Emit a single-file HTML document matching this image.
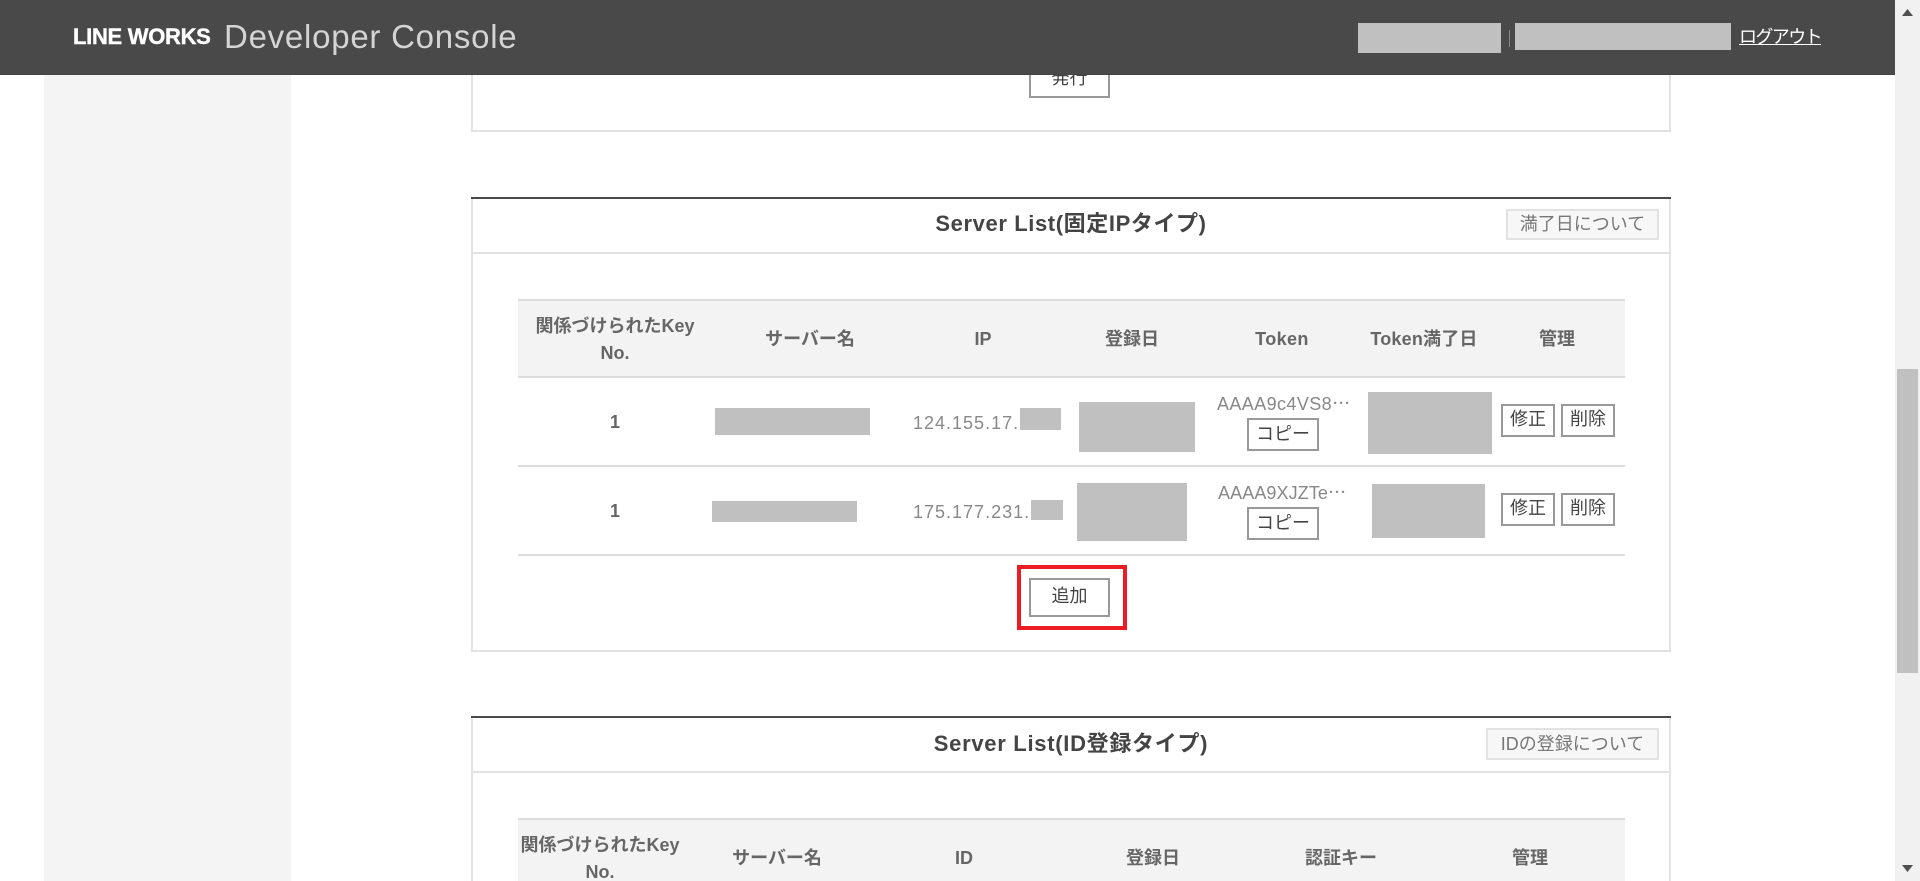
<!DOCTYPE html>
<html lang="ja">
<head>
<meta charset="utf-8">
<title>LINE WORKS Developer Console</title>
<style>
html,body{margin:0;padding:0;width:1920px;height:881px;overflow:hidden;background:#fff}
body{position:relative;font-family:"Liberation Sans","Noto Sans CJK JP",sans-serif;font-size:18px;color:#777}
div,a,span{position:absolute;box-sizing:border-box}
span.e{position:static;font-family:"Noto Sans CJK JP",sans-serif;letter-spacing:0}
.side{left:44px;top:0;width:247px;height:881px;background:#f4f4f4}
.card{left:471px;width:1200px;border:2px solid #e2e2e2;border-top:0;background:#fff}
.top{height:2px;background:#4a4a4a;left:471px;width:1200px}
.line{left:473px;width:1196px;height:2px;background:#e2e2e2}
.thead{left:518px;width:1107px;background:#f3f3f3;border-top:2px solid #ddd}
.rule{left:518px;width:1107px;height:2px;background:#ddd}
.r{background:#c0c0c0}
.t{white-space:nowrap;text-align:center;width:300px;height:24px;line-height:24px}
.th{font-weight:700;color:#666;font-size:18px}
.title{font-weight:700;color:#444;font-size:22px;height:30px;line-height:30px;width:500px;text-align:center;white-space:nowrap;letter-spacing:.6px}
.btn{border:2px solid #999;background:#fff;color:#444;text-align:center;white-space:nowrap;font-size:18px}
.gbtn{border:2px solid #e2e2e2;background:#f7f7f7;color:#777;text-align:center;white-space:nowrap;font-size:18px}
.v{color:#888;letter-spacing:1px;text-align:left;width:auto}
</style>
</head>
<body>
<div class="side"></div>

<!-- first card -->
<div class="card" style="top:0;height:132px"></div>
<div class="btn" style="left:1029px;top:60px;width:81px;height:38px;line-height:32px">発行</div>

<!-- second card -->
<div class="card" style="top:197px;height:455px"></div>
<div class="top" style="top:197px"></div>
<div class="line" style="top:252px"></div>
<div class="title" style="left:821px;top:209px">Server List(固定IPタイプ)</div>
<div class="gbtn" style="left:1506px;top:209px;width:153px;height:31px;line-height:27px">満了日について</div>

<div class="thead" style="top:299px;height:78px"></div>
<div class="t th" style="left:465px;top:314px">関係づけられたKey</div>
<div class="t th" style="left:465px;top:341px">No.</div>
<div class="t th" style="left:660px;top:327px">サーバー名</div>
<div class="t th" style="left:833px;top:327px">IP</div>
<div class="t th" style="left:982px;top:327px">登録日</div>
<div class="t th" style="left:1132px;top:327px;letter-spacing:.4px">Token</div>
<div class="t th" style="left:1274px;top:327px;letter-spacing:.2px">Token満了日</div>
<div class="t th" style="left:1407px;top:327px">管理</div>
<div class="rule" style="top:376px"></div>

<div class="t th" style="left:465px;top:410px">1</div>
<div class="r" style="left:715px;top:408px;width:155px;height:27px"></div>
<div class="t v" style="left:913px;top:411px">124.155.17.</div>
<div class="r" style="left:1020px;top:408px;width:41px;height:22px"></div>
<div class="r" style="left:1079px;top:402px;width:116px;height:50px"></div>
<div class="t" style="left:1217px;top:391px;width:140px;color:#888;letter-spacing:.4px;text-align:left">AAAA9c4VS8<span class="e">…</span></div>
<div class="btn" style="left:1247px;top:418px;width:72px;height:33px;line-height:29px">コピー</div>
<div class="r" style="left:1368px;top:392px;width:124px;height:62px"></div>
<div class="btn" style="left:1501px;top:404px;width:54px;height:33px;line-height:27px">修正</div>
<div class="btn" style="left:1561px;top:404px;width:54px;height:33px;line-height:27px">削除</div>
<div class="rule" style="top:465px"></div>

<div class="t th" style="left:465px;top:499px">1</div>
<div class="r" style="left:712px;top:501px;width:145px;height:21px"></div>
<div class="t v" style="left:913px;top:500px">175.177.231.</div>
<div class="r" style="left:1031px;top:500px;width:32px;height:20px"></div>
<div class="r" style="left:1077px;top:483px;width:110px;height:58px"></div>
<div class="t" style="left:1218px;top:480px;width:140px;color:#888;letter-spacing:.1px;text-align:left">AAAA9XJZTe<span class="e">…</span></div>
<div class="btn" style="left:1247px;top:507px;width:72px;height:33px;line-height:29px">コピー</div>
<div class="r" style="left:1372px;top:484px;width:113px;height:54px"></div>
<div class="btn" style="left:1501px;top:493px;width:54px;height:33px;line-height:27px">修正</div>
<div class="btn" style="left:1561px;top:493px;width:54px;height:33px;line-height:27px">削除</div>
<div class="rule" style="top:554px"></div>

<div class="btn" style="left:1029px;top:578px;width:81px;height:39px;line-height:33px">追加</div>
<div style="left:1017px;top:565px;width:110px;height:65px;border:4px solid #ed1c24"></div>

<!-- third card -->
<div class="card" style="top:716px;height:200px"></div>
<div class="top" style="top:716px"></div>
<div class="line" style="top:771px"></div>
<div class="title" style="left:821px;top:729px;letter-spacing:.7px">Server List(ID登録タイプ)</div>
<div class="gbtn" style="left:1486px;top:728px;width:173px;height:32px;line-height:28px">IDの登録について</div>

<div class="thead" style="top:818px;height:80px"></div>
<div class="t th" style="left:450px;top:833px">関係づけられたKey</div>
<div class="t th" style="left:450px;top:860px">No.</div>
<div class="t th" style="left:627px;top:846px">サーバー名</div>
<div class="t th" style="left:814px;top:846px">ID</div>
<div class="t th" style="left:1003px;top:846px">登録日</div>
<div class="t th" style="left:1191px;top:846px">認証キー</div>
<div class="t th" style="left:1380px;top:846px">管理</div>

<!-- header -->
<div style="left:0;top:0;width:1895px;height:75px;background:#494949;border-bottom:1px solid #444">
  <span style="left:73px;top:22px;font-size:22px;line-height:30px;font-weight:700;color:#fff;white-space:nowrap;letter-spacing:-.3px;-webkit-text-stroke:.4px #fff">LINE WORKS</span>
  <span style="left:224px;top:18px;font-size:33px;line-height:38px;color:#d4d4d4;white-space:nowrap;letter-spacing:.75px">Developer Console</span>
  <div class="r" style="left:1358px;top:23px;width:143px;height:30px"></div>
  <div style="left:1509px;top:30px;width:1px;height:17px;background:#8a8a8a"></div>
  <div class="r" style="left:1515px;top:23px;width:216px;height:27px"></div>
  <a style="left:1739px;top:25px;width:82px;height:24px;line-height:24px;color:#fff;text-decoration:underline;font-size:18px;white-space:nowrap;letter-spacing:-1.6px">ログアウト</a>
</div>

<!-- scrollbar -->
<div style="left:1895px;top:0;width:25px;height:881px;background:#f1f1f1"></div>
<div style="left:1897px;top:369px;width:21px;height:304px;background:#c0c0c0"></div>
<svg style="position:absolute;left:1895px;top:0" width="25" height="881" viewBox="0 0 25 881">
  <path d="M12.5 9 L18 16 L7 16 Z" fill="#505050"/>
  <path d="M12.5 872 L7 865 L18 865 Z" fill="#505050"/>
</svg>
</body>
</html>
